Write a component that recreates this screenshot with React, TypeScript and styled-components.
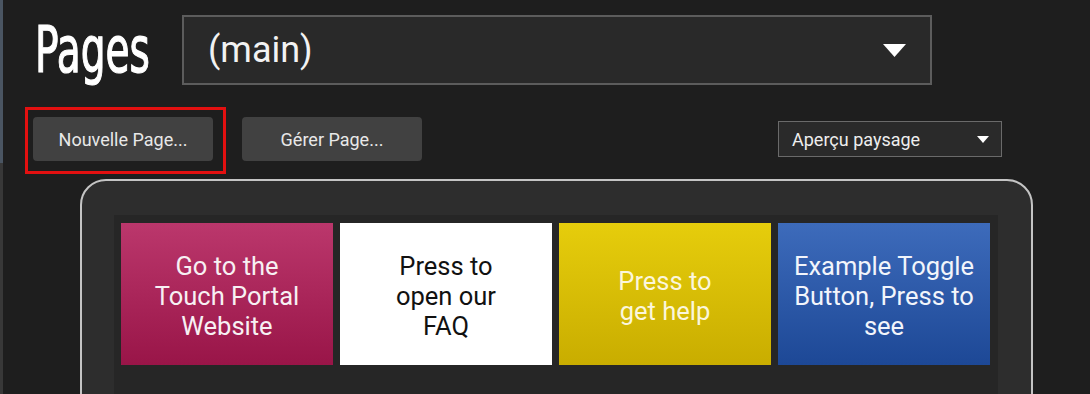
import React from "react";
import styled, { createGlobalStyle } from "styled-components";

const Global = createGlobalStyle`
  html, body { margin: 0; padding: 0; background: #1e1e1e; overflow: hidden; }
  body { font-family: Roboto, "Liberation Sans", Arial, sans-serif; }
`;

const Page = styled.div`
  display: flex;
  width: 1090px;
  height: 394px;
  background: #1e1e1e;
  overflow: hidden;
`;

const EdgeStrip = styled.div`
  width: 3px;
  flex: none;
  background: linear-gradient(#4a5562 0, #4a5562 163px, #383838 163px, #383838 100%);
`;

const Main = styled.div`
  flex: 1;
  display: flex;
  flex-direction: column;
`;

const Header = styled.div`
  display: flex;
  align-items: center;
  height: 70px;
  margin-top: 15px;
  padding-left: 32px;
`;

const Title = styled.h1`
  margin: 0;
  width: 147px;
  font-family: "DejaVu Sans Condensed", "DejaVu Sans", sans-serif;
  font-weight: 400;
  font-size: 64px;
  line-height: 70px;
  color: #ffffff;
  white-space: nowrap;
  -webkit-text-stroke: 1.2px #ffffff;
`;

const TitleText = styled.span`
  display: inline-block;
  transform-origin: left center;
  transform: scaleX(0.68);
  margin-top: -1px;
`;

const MainSelect = styled.div`
  width: 750px;
  height: 70px;
  box-sizing: border-box;
  border: 2px solid #5c5c5c;
  background: #292929;
  display: flex;
  align-items: center;
  justify-content: space-between;
  padding: 0 24px 0 24px;
  color: #f2f2f2;
  font-size: 36px;
`;

const Caret = styled.svg<{ $w: number; $h: number }>`
  width: ${(p) => p.$w}px;
  height: ${(p) => p.$h}px;
  flex: none;
  display: block;
`;

const Toolbar = styled.div`
  display: flex;
  align-items: flex-start;
  margin-top: 22px;
  padding-left: 22px;
  padding-right: 88px;
`;

const Highlight = styled.div`
  border: 3px solid #e31010;
  padding: 7px 10px 10px 5px;
  margin-right: 16px;
`;

const Button = styled.button<{ $offset?: number }>`
  width: 180px;
  height: 44px;
  margin-top: ${(p) => p.$offset ?? 0}px;
  border: none;
  border-radius: 4px;
  background: #414141;
  color: #e8e8e8;
  font-family: Roboto, "Liberation Sans", sans-serif;
  font-size: 18px;
  padding: 0;
  cursor: pointer;
`;

const Spacer = styled.div`
  flex: 1;
`;

const SmallSelect = styled.div`
  width: 224px;
  height: 36px;
  margin-top: 14px;
  box-sizing: border-box;
  border: 1px solid #6a6a6a;
  background: #2a2a2a;
  display: flex;
  align-items: center;
  justify-content: space-between;
  padding: 0 12px 0 13px;
  color: #eeeeee;
  font-size: 18px;
`;

const Frame = styled.div`
  margin-top: 5px;
  margin-left: 77px;
  width: 953px;
  height: 260px;
  flex: none;
  box-sizing: border-box;
  border: 2px solid #c4c4c4;
  border-radius: 26px;
  background: #2d2d2d;
  padding: 34px 33px 0 32px;
`;

const Screen = styled.div`
  background: #262626;
  padding: 8px 8px 8px 7px;
  height: 100%;
  box-sizing: border-box;
  display: grid;
  grid-template-columns: repeat(4, 1fr);
  grid-template-rows: 142px;
  column-gap: 7px;
`;

const Tile = styled.div<{ $top: string; $bottom: string; $fg: string }>`
  background: linear-gradient(${(p) => p.$top}, ${(p) => p.$bottom});
  color: ${(p) => p.$fg};
  display: flex;
  align-items: center;
  justify-content: center;
  text-align: center;
  font-family: Roboto, "Liberation Sans", sans-serif;
  font-size: 25.5px;
  line-height: 30px;
  padding: 4px 4px 0;
`;

const tiles = [
  { top: "#bb376c", bottom: "#991548", fg: "#f7f0f3", lines: ["Go to the", "Touch Portal", "Website"] },
  { top: "#ffffff", bottom: "#ffffff", fg: "#111111", lines: ["Press to", "open our", "FAQ"] },
  { top: "#e6cd0c", bottom: "#c9ad00", fg: "#fbf6dc", lines: ["Press to", "get help"] },
  { top: "#3d6bbb", bottom: "#1d4896", fg: "#f2f5fb", lines: ["Example Toggle", "Button, Press to", "see"] },
];

export default function App() {
  return (
    <>
      <Global />
      <Page>
        <EdgeStrip />
        <Main>
          <Header>
            <Title>
              <TitleText>Pages</TitleText>
            </Title>
            <MainSelect>
              <span>(main)</span>
              <Caret $w={23} $h={13} viewBox="0 0 23 13">
                <polygon points="0,0 23,0 11.5,13" fill="#ffffff" />
              </Caret>
            </MainSelect>
          </Header>
          <Toolbar>
            <Highlight>
              <Button>Nouvelle Page...</Button>
            </Highlight>
            <Button $offset={10}>Gérer Page...</Button>
            <Spacer />
            <SmallSelect>
              <span>Aperçu paysage</span>
              <Caret $w={12} $h={7} viewBox="0 0 12 7">
                <polygon points="0,0 12,0 6,7" fill="#ffffff" />
              </Caret>
            </SmallSelect>
          </Toolbar>
          <Frame>
            <Screen>
              {tiles.map((t, i) => (
                <Tile key={i} $top={t.top} $bottom={t.bottom} $fg={t.fg}>
                  <div>
                    {t.lines.map((l, j) => (
                      <div key={j}>{l}</div>
                    ))}
                  </div>
                </Tile>
              ))}
            </Screen>
          </Frame>
        </Main>
      </Page>
    </>
  );
}
